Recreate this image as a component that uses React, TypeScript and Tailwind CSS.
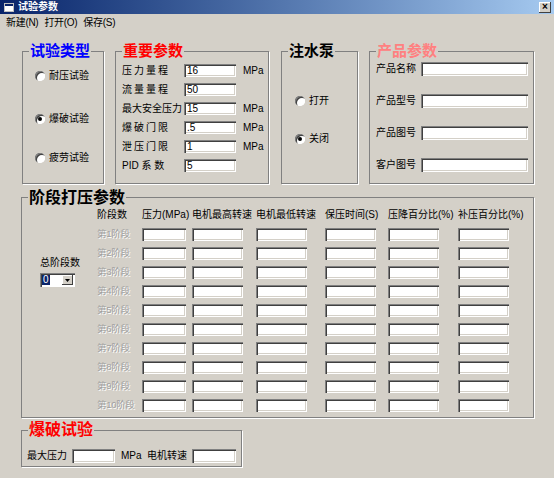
import React from 'react';

// 经典 Windows 风格的凹陷输入框
function Edit({ className = '', value }: { className?: string; value?: string }) {
  return (
    <div
      className={`bg-white shadow-[inset_1px_1px_0_#808080,inset_2px_2px_0_#404040,inset_-1px_-1px_0_#ffffff,inset_-2px_-2px_0_#d4d0c8] pl-[3px] pt-[2px] text-[10px] leading-[10px] text-black ${className}`}
    >
      {value}
    </div>
  );
}

function Radio({ checked, label, className = '' }: { checked?: boolean; label: string; className?: string }) {
  return (
    <div className={`flex items-center gap-[4px] h-[12px] text-[10px] leading-[12px] ${className}`}>
      <span className="w-[10px] h-[10px] rounded-full bg-white shadow-[inset_1px_1px_0_#808080,inset_2px_2px_0_#404040,inset_-1px_-1px_0_#ffffff] flex items-center justify-center">
        {checked && <span className="w-[4px] h-[4px] rounded-full bg-black" />}
      </span>
      <span>{label}</span>
    </div>
  );
}

function Group({
  title,
  titleClass,
  className,
  children,
}: {
  title: string;
  titleClass: string;
  className: string;
  children: React.ReactNode;
}) {
  return (
    <fieldset className={`border border-[#808080] shadow-[1px_1px_0_#ffffff] ${className}`}>
      <legend className={`ml-[6px] px-[1px] font-bold ${titleClass}`}>{title}</legend>
      {children}
    </fieldset>
  );
}

const importantParams = [
  { label: '压力量程', value: '16', unit: 'MPa', track: true },
  { label: '流量量程', value: '50', unit: '', track: true },
  { label: '最大安全压力', value: '15', unit: 'MPa', track: false },
  { label: '爆破门限', value: '.5', unit: 'MPa', track: true },
  { label: '泄压门限', value: '1', unit: 'MPa', track: true },
  { label: 'PID 系 数', value: '5', unit: '', track: false },
];

const productParams = ['产品名称', '产品型号', '产品图号', '客户图号'];

const stageHeaders = ['阶段数', '压力(MPa)', '电机最高转速', '电机最低转速', '保压时间(S)', '压降百分比(%)', '补压百分比(%)'];

const stages = Array.from({ length: 10 }, (_, i) => `第${i + 1}阶段`);

export default function App() {
  return (
    <div className="w-[554px] h-[478px] overflow-hidden bg-[#d4d0c8] text-black font-['Liberation_Sans','Noto_Sans_CJK_SC',sans-serif]">
      {/* 标题栏 */}
      <div className="h-[14px] flex items-center bg-gradient-to-r from-[#0a246a] to-[#a6caf0] pl-[4px] pr-[3px]">
        <svg width="10" height="9" viewBox="0 0 10 9" className="mr-[4px]">
          <rect x="0.5" y="0.5" width="9" height="8" fill="#ffffff" stroke="#c0c0c0" />
          <rect x="1" y="1" width="8" height="2" fill="#0a246a" />
        </svg>
        <span className="text-white font-bold text-[10px] leading-[12px]">试验参数</span>
        <div className="ml-auto w-[12px] h-[11px] bg-[#d4d0c8] shadow-[inset_-1px_-1px_0_#404040,inset_1px_1px_0_#ffffff] flex items-center justify-center text-[10px] leading-[10px] font-bold">
          ×
        </div>
      </div>

      {/* 菜单栏 */}
      <div className="h-[17px] flex items-center gap-[6px] pl-[6px] text-[10px] leading-[12px] tracking-[-0.3px]">
        <span>新建(N)</span>
        <span>打开(O)</span>
        <span>保存(S)</span>
      </div>

      {/* 上部四个分组 */}
      <div className="flex mt-[12px] ml-[22px]">
        <Group title="试验类型" titleClass="text-[15px] leading-[16px] text-[#0000ff]" className="w-[82px] h-[141px]">
          <div className="flex flex-col pl-[12px] pt-[11px]">
            <Radio label="耐压试验" />
            <Radio label="爆破试验" checked className="mt-[31px]" />
            <Radio label="疲劳试验" className="mt-[27px]" />
          </div>
        </Group>

        <Group title="重要参数" titleClass="text-[15px] leading-[16px] text-[#ff0000]" className="ml-[11px] w-[154px] h-[141px]">
          <div className="flex flex-col gap-[6px] pl-[6px] pt-[5px]">
            {importantParams.map((p) => (
              <div key={p.label} className="flex items-center h-[13px] text-[10px] leading-[12px]">
                <span className={`w-[62px] whitespace-pre ${p.track ? 'tracking-[2px]' : ''}`}>{p.label}</span>
                <Edit className="w-[52px] h-[13px]" value={p.value} />
                <span className="ml-[7px]">{p.unit}</span>
              </div>
            ))}
          </div>
        </Group>

        <Group title="注水泵" titleClass="text-[15px] leading-[16px] text-black" className="ml-[12px] w-[77px] h-[141px]">
          <div className="flex flex-col pl-[13px] pt-[36px]">
            <Radio label="打开" />
            <Radio label="关闭" checked className="mt-[26px]" />
          </div>
        </Group>

        <Group title="产品参数" titleClass="text-[15px] leading-[16px] text-[#ff8080]" className="ml-[11px] w-[165px] h-[141px]">
          <div className="flex flex-col gap-[18px] pl-[6px] pt-[3px]">
            {productParams.map((l) => (
              <div key={l} className="flex items-center h-[14px] text-[10px] leading-[12px]">
                <span className="w-[45px]">{l}</span>
                <Edit className="w-[107px] h-[14px]" />
              </div>
            ))}
          </div>
        </Group>
      </div>

      {/* 阶段打压参数 */}
      <Group title="阶段打压参数" titleClass="text-[16px] leading-[19px] text-black" className="ml-[21px] mt-[4px] w-[513px]">
        <div className="flex pt-[2px] pb-[5px]">
          <div className="w-[75px] pl-[18px] pt-[48px] flex flex-col text-[10px] leading-[12px]">
            <span>总阶段数</span>
            <div className="mt-[4px] w-[35px] h-[14px] bg-white shadow-[inset_1px_1px_0_#808080,inset_2px_2px_0_#404040,inset_-1px_-1px_0_#ffffff] flex items-center pl-[2px] pr-[2px]">
              <span className="bg-[#0a246a] text-white text-[10px] leading-[10px] px-[1px]">0</span>
              <div className="ml-auto w-[11px] h-[10px] bg-[#d4d0c8] shadow-[inset_-1px_-1px_0_#404040,inset_1px_1px_0_#ffffff] flex items-center justify-center">
                <svg width="5" height="3" viewBox="0 0 5 3">
                  <path d="M0 0h5L2.5 3z" fill="#000000" />
                </svg>
              </div>
            </div>
          </div>
          <div className="grid grid-cols-[45px_50px_64px_69px_63px_70px_51px] gap-y-[6px] text-[10px] leading-[12px]">
            {stageHeaders.map((h) => (
              <span key={h} className="h-[13px] whitespace-nowrap">
                {h}
              </span>
            ))}
            {stages.map((s) => (
              <React.Fragment key={s}>
                <span className="h-[13px] text-[9.5px] tracking-[-0.3px] text-[#a0a0a0] [text-shadow:1px_1px_0_#ffffff] whitespace-nowrap">{s}</span>
                <Edit className="w-[44px] h-[13px]" />
                <Edit className="w-[51px] h-[13px]" />
                <Edit className="w-[51px] h-[13px]" />
                <Edit className="w-[51px] h-[13px]" />
                <Edit className="w-[51px] h-[13px]" />
                <Edit className="w-[51px] h-[13px]" />
              </React.Fragment>
            ))}
          </div>
        </div>
      </Group>

      {/* 爆破试验 */}
      <Group title="爆破试验" titleClass="text-[16px] leading-[20px] text-[#ff0000]" className="ml-[21px] mt-[2px] w-[221px]">
        <div className="flex items-center pl-[5px] pt-[9px] pb-[3px] text-[10px] leading-[12px]">
          <span className="w-[45px]">最大压力</span>
          <Edit className="w-[43px] h-[14px]" />
          <span className="ml-[6px] w-[26px]">MPa</span>
          <span className="w-[45px]">电机转速</span>
          <Edit className="w-[44px] h-[14px]" />
        </div>
      </Group>
    </div>
  );
}
